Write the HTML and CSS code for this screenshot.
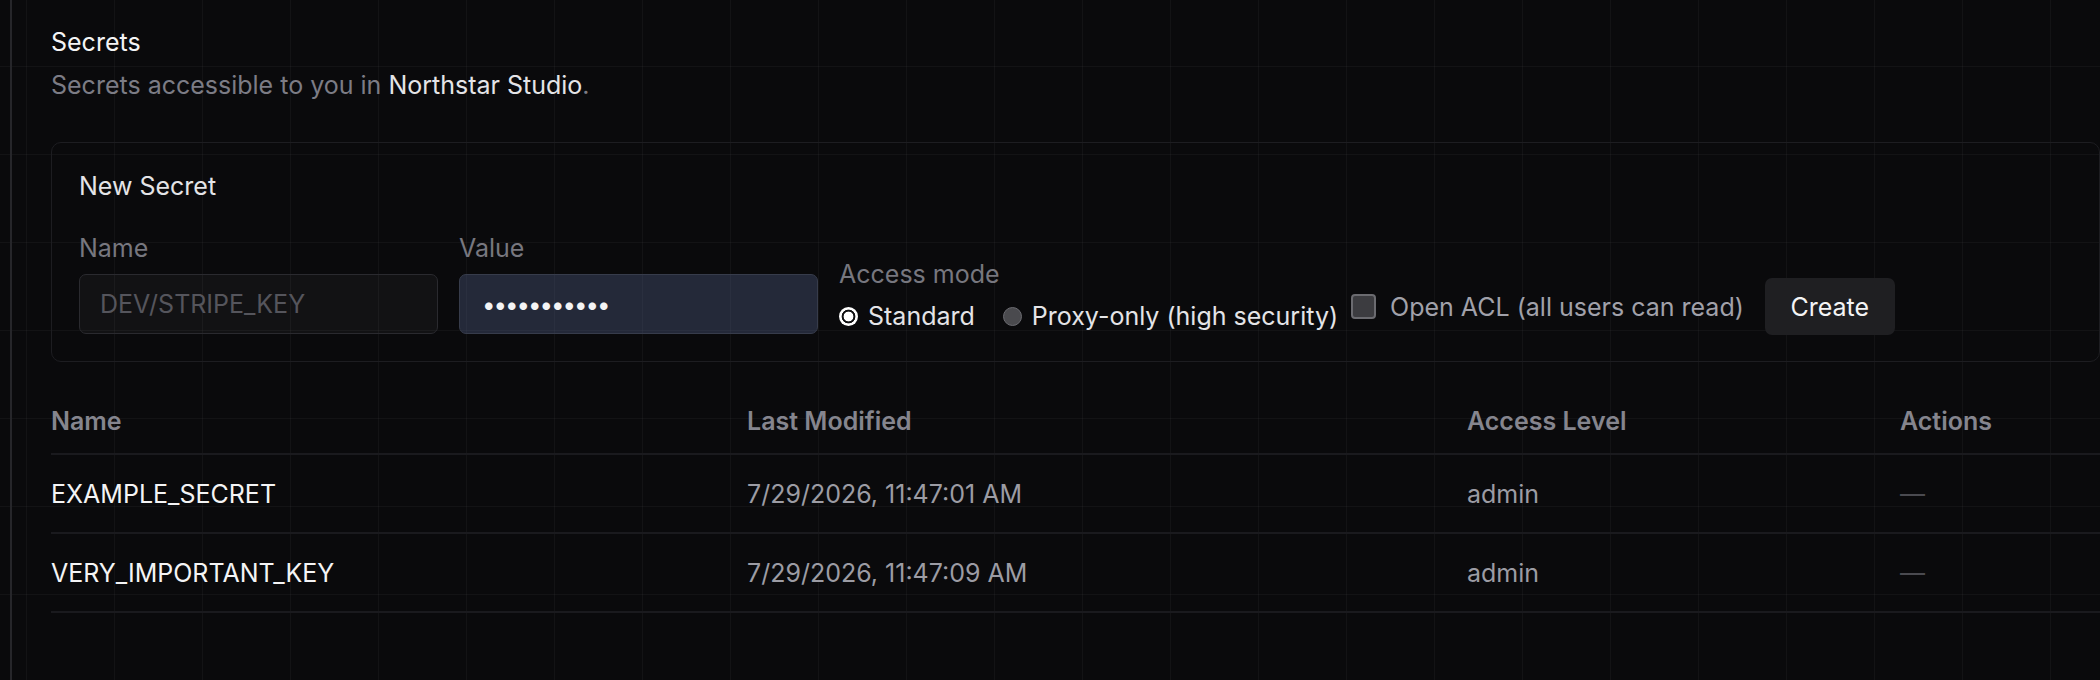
FILE: index.html
```html
<!DOCTYPE html>
<html lang="en">
<head>
<meta charset="utf-8">
<title>Secrets</title>
<link rel="stylesheet" href="styles.css">
</head>
<body>
<div class="app">
  <aside class="rail"></aside>
  <main class="content">
    <header class="page-head">
      <h1 class="page-title">Secrets</h1>
      <p class="page-sub">Secrets accessible to you in <span class="org">Northstar Studio</span>.</p>
    </header>

    <section class="card">
      <h2 class="card-title">New Secret</h2>
      <form class="form-row" onsubmit="return false">
        <label class="field">
          <span class="field-label">Name</span>
          <input class="input" type="text" placeholder="DEV/STRIPE_KEY">
        </label>
        <label class="field">
          <span class="field-label">Value</span>
          <input class="input input-filled" type="password" value="supersecret">
        </label>
        <div class="field mode">
          <span class="field-label">Access mode</span>
          <div class="radios">
            <label class="radio"><span class="radio-dot checked"></span><span class="radio-text">Standard</span></label>
            <label class="radio"><span class="radio-dot"></span><span class="radio-text">Proxy-only (high security)</span></label>
          </div>
        </div>
        <label class="check">
          <span class="check-box"></span>
          <span class="check-text">Open ACL (all users can read)</span>
        </label>
        <button class="btn" type="button">Create</button>
      </form>
    </section>

    <table class="table">
      <colgroup>
        <col class="c-name"><col class="c-mod"><col class="c-lvl"><col class="c-act">
      </colgroup>
      <thead>
        <tr><th>Name</th><th>Last Modified</th><th>Access Level</th><th>Actions</th></tr>
      </thead>
      <tbody>
        <tr><td class="t-name">EXAMPLE_SECRET</td><td class="t-muted">7/29/2026, 11:47:01 AM</td><td class="t-muted">admin</td><td class="t-dash">—</td></tr>
        <tr><td class="t-name">VERY_IMPORTANT_KEY</td><td class="t-muted">7/29/2026, 11:47:09 AM</td><td class="t-muted">admin</td><td class="t-dash">—</td></tr>
      </tbody>
    </table>
  </main>
</div>
</body>
</html>
```

FILE: styles.css
```css
* { box-sizing: border-box; }

html, body {
  margin: 0;
  height: 100%;
  overflow: hidden;
}

body {
  background-color: #0a0a0c;
  background-image:
    linear-gradient(to right, rgba(255,255,255,0.035) 1px, transparent 1px),
    linear-gradient(to bottom, rgba(255,255,255,0.035) 1px, transparent 1px);
  background-size: 88px 88px;
  background-position: 26px 66px;
  font-family: Inter, "Noto Sans", sans-serif;
  font-size: 25px;
  line-height: 32px;
  color: #f4f4f5;
}

.app {
  display: flex;
  min-height: 100%;
}

.rail {
  width: 12px;
  flex: none;
  border-right: 2px solid #26262a;
}

.content {
  flex: 1;
  padding: 26px 0 0 39px;
  min-width: 0;
}

.page-title {
  margin: 0;
  font-size: 25px;
  font-weight: 400;
  line-height: 32px;
  color: #f4f4f5;
}

.page-sub {
  margin: 11px 0 0;
  color: #7c7c85;
}

.org { color: #e4e4e7; }

.card {
  margin-top: 41px;
  border: 1.5px solid #1d1d21;
  border-radius: 10px;
  padding: 27px 27px 27px;
}

.card-title {
  margin: 0;
  font-size: 25px;
  font-weight: 400;
  line-height: 32px;
  color: #e4e4e7;
}

.form-row {
  display: flex;
  align-items: flex-end;
  margin-top: 30px;
}

.field {
  display: flex;
  flex-direction: column;
  margin-right: 21px;
}

.field-label {
  color: #77777f;
  margin-bottom: 10px;
}

.input {
  width: 359px;
  height: 60px;
  border-radius: 7px;
  border: 1.5px solid #2a2a2f;
  background: rgba(255,255,255,0.035);
  padding: 0 20px;
  font-family: Inter, "Noto Sans", sans-serif;
  font-size: 25px;
  color: #f4f4f5;
  outline: none;
}

.input::placeholder { color: #55555c; }

.input-filled {
  background: rgba(87,101,143,0.35);
  border-color: #373c4b;
  padding-left: 22px;
  font-size: 24px;
  letter-spacing: -2px;
}

.mode { margin-right: 13px; }

.mode .field-label { margin-bottom: 10px; }

.radios {
  display: flex;
  align-items: center;
  gap: 28px;
  margin-bottom: 2px;
}

.radio {
  display: flex;
  align-items: center;
  gap: 10px;
  color: #e4e4e7;
}

.radio-dot {
  width: 19px;
  height: 19px;
  border-radius: 50%;
  background: #4a4a4e;
  border: 1.5px solid #6a6a70;
}

.radio-dot.checked {
  border: none;
  background: radial-gradient(circle, #ffffff 0 4.6px, #111113 5.2px 6.6px, #ffffff 7.2px);
}

.check {
  display: flex;
  align-items: center;
  height: 57px;
  gap: 14px;
  margin-right: 21px;
  margin-bottom: -1px;
  color: #a1a1aa;
}

.check-box {
  width: 25px;
  height: 25px;
  border-radius: 4px;
  background: #3c3c40;
  border: 2px solid #6b6b70;
}

.btn {
  height: 57px;
  width: 130px;
  margin-bottom: -1px;
  border: none;
  border-radius: 7px;
  background: #1f1f22;
  color: #f4f4f5;
  font-family: Inter, "Noto Sans", sans-serif;
  font-size: 25px;
}

.table {
  margin-top: 25px;
  width: 2049px;
  border-collapse: collapse;
  table-layout: fixed;
}

.c-name { width: 696px; }
.c-mod { width: 720px; }
.c-lvl { width: 433px; }
.c-act { width: 200px; }

.table th {
  text-align: left;
  font-weight: 600;
  color: #85858e;
  padding: 18px 0 16px;
  border-bottom: 2px solid #1a1a1e;
}

.table td {
  padding: 23px 0 22px;
  border-bottom: 2px solid #1a1a1e;
  white-space: nowrap;
}

.t-name { color: #f4f4f5; }
.t-muted { color: #9c9ca4; }
.t-dash { color: #4a4a50; }
```
